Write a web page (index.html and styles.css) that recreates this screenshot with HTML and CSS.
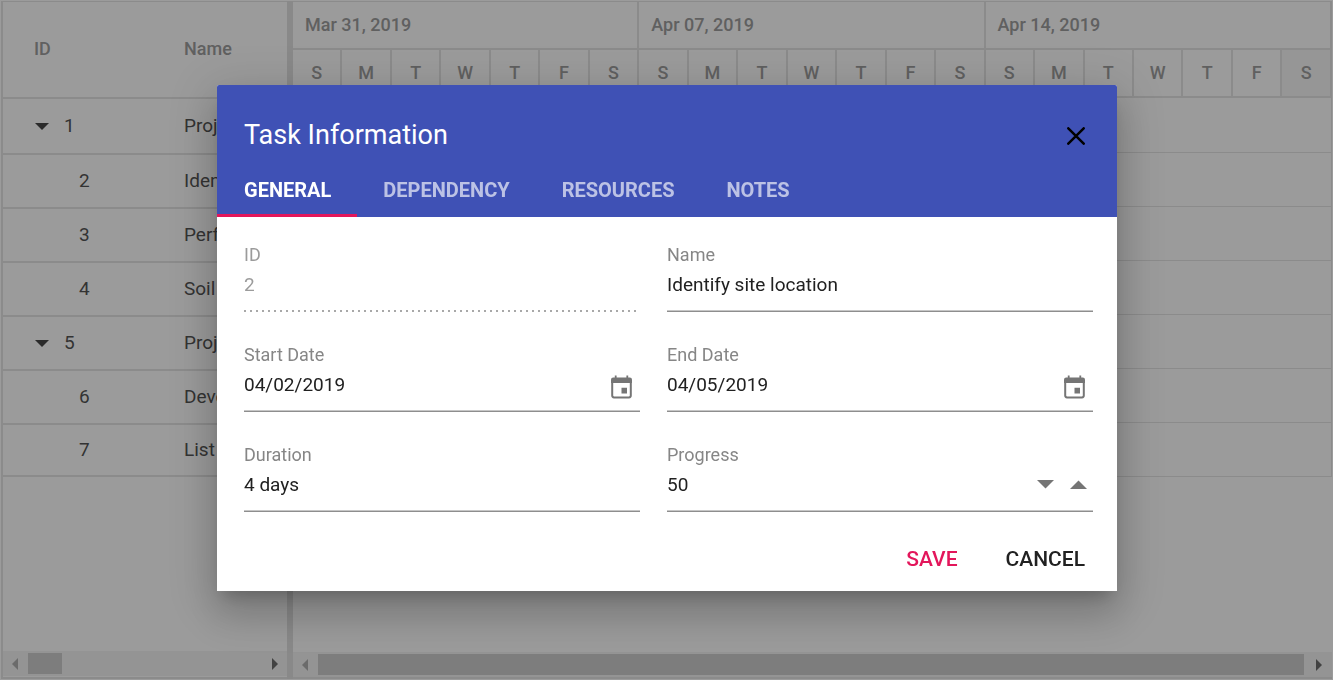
FILE: index.html
```
<!DOCTYPE html>
<html lang="en">
<head>
<meta charset="utf-8">
<title>Task Information</title>
<link rel="stylesheet" href="styles.css">
</head>
<body>
<main class="gantt">
  <section class="pane tree-pane">
    <table class="tree">
      <colgroup><col class="col-id"><col></colgroup>
      <thead><tr><th>ID</th><th>Name</th></tr></thead>
      <tbody>
        <tr><td class="parent"><svg class="expander" viewBox="0 0 14 7"><path d="M0 0H14L7 7Z"/></svg>1</td><td>Project</td></tr>
        <tr><td class="child">2</td><td>Identify</td></tr>
        <tr><td class="child">3</td><td>Perform</td></tr>
        <tr><td class="child">4</td><td>Soil test</td></tr>
        <tr><td class="parent"><svg class="expander" viewBox="0 0 14 7"><path d="M0 0H14L7 7Z"/></svg>5</td><td>Project</td></tr>
        <tr><td class="child">6</td><td>Develop</td></tr>
        <tr><td class="child">7</td><td>List</td></tr>
      </tbody>
    </table>
    <div class="scrollbar">
      <svg class="arrow" viewBox="0 0 6 12"><path d="M6 0V12L0 6Z"/></svg>
      <div class="track"><div class="thumb thumb-short"></div></div>
      <svg class="arrow arrow-active" viewBox="0 0 6 12"><path d="M0 0V12L6 6Z"/></svg>
    </div>
  </section>
  <div class="splitter"></div>
  <section class="pane chart-pane">
    <table class="timeline">
      <thead>
        <tr class="weeks"><th colspan="7">Mar 31, 2019</th><th colspan="7">Apr 07, 2019</th><th colspan="7">Apr 14, 2019</th></tr>
        <tr class="days">
          <th>S</th><th>M</th><th>T</th><th>W</th><th>T</th><th>F</th><th>S</th>
          <th>S</th><th>M</th><th>T</th><th>W</th><th>T</th><th>F</th><th>S</th>
          <th>S</th><th>M</th><th>T</th><th>W</th><th>T</th><th>F</th><th class="shaded">S</th>
        </tr>
      </thead>
      <tbody>
        <tr><td colspan="21"></td></tr>
        <tr><td colspan="21"></td></tr>
        <tr><td colspan="21"></td></tr>
        <tr><td colspan="21"></td></tr>
        <tr><td colspan="21"></td></tr>
        <tr><td colspan="21"></td></tr>
        <tr><td colspan="21"></td></tr>
      </tbody>
    </table>
    <div class="scrollbar">
      <svg class="arrow" viewBox="0 0 6 12"><path d="M6 0V12L0 6Z"/></svg>
      <div class="track"><div class="thumb"></div></div>
      <svg class="arrow arrow-active" viewBox="0 0 6 12"><path d="M0 0V12L6 6Z"/></svg>
    </div>
  </section>
</main>

<div class="overlay">
  <form class="dialog" role="dialog" aria-labelledby="dialog-title">
    <header class="dialog-header">
      <div class="title-row">
        <h1 class="title" id="dialog-title">Task Information</h1>
        <button class="close" type="button" aria-label="Close">
          <svg viewBox="0 0 18 18"><path d="M1.3 1.3L16.7 16.7M16.7 1.3L1.3 16.7"/></svg>
        </button>
      </div>
      <div class="tabs" role="tablist">
        <button class="tab tab-active" type="button" role="tab" aria-selected="true">GENERAL</button>
        <button class="tab" type="button" role="tab">DEPENDENCY</button>
        <button class="tab" type="button" role="tab">RESOURCES</button>
        <button class="tab" type="button" role="tab">NOTES</button>
      </div>
    </header>
    <div class="fields">
      <div class="field field-disabled">
        <label for="task-id">ID</label>
        <div class="control"><input id="task-id" type="text" value="2" disabled></div>
      </div>
      <div class="field">
        <label for="task-name">Name</label>
        <div class="control"><input id="task-name" type="text" value="Identify site location"></div>
      </div>
      <div class="field">
        <label for="start-date">Start Date</label>
        <div class="control">
          <input id="start-date" type="text" value="04/02/2019">
          <button class="date-button" type="button" aria-label="Pick start date"><svg viewBox="0 0 21 24"><path class="frame" d="M1.2 7V20.6Q1.2 22.4 3 22.4H18Q19.8 22.4 19.8 20.6V7"/><path d="M0 8V4.8Q0 2.6 2.2 2.6H3.8V.4H5.6V2.6H15.4V.4H17.2V2.6H18.8Q21 2.6 21 4.8V8ZM10.5 12.8H16V18.6H10.5Z"/></svg></button>
        </div>
      </div>
      <div class="field">
        <label for="end-date">End Date</label>
        <div class="control">
          <input id="end-date" type="text" value="04/05/2019">
          <button class="date-button" type="button" aria-label="Pick end date"><svg viewBox="0 0 21 24"><path class="frame" d="M1.2 7V20.6Q1.2 22.4 3 22.4H18Q19.8 22.4 19.8 20.6V7"/><path d="M0 8V4.8Q0 2.6 2.2 2.6H3.8V.4H5.6V2.6H15.4V.4H17.2V2.6H18.8Q21 2.6 21 4.8V8ZM10.5 12.8H16V18.6H10.5Z"/></svg></button>
        </div>
      </div>
      <div class="field">
        <label for="duration">Duration</label>
        <div class="control"><input id="duration" type="text" value="4 days"></div>
      </div>
      <div class="field">
        <label for="progress">Progress</label>
        <div class="control">
          <input id="progress" type="text" value="50">
          <div class="spinner">
            <button type="button" aria-label="Decrease progress"><svg viewBox="0 0 17 9"><path d="M0 0H17L8.5 8.5Z"/></svg></button>
            <button type="button" aria-label="Increase progress"><svg viewBox="0 0 17 9"><path d="M0 9H17L8.5 .5Z"/></svg></button>
          </div>
        </div>
      </div>
    </div>
    <footer class="actions">
      <button class="action action-primary" type="button">SAVE</button>
      <button class="action" type="button">CANCEL</button>
    </footer>
  </form>
</div>
</body>
</html>
```
FILE: styles.css
```
* { box-sizing: border-box; }

:root {
  --surface: #9b9b9b;
  --line: #8b8b8b;
  --accent: #e3165b;
}

body {
  margin: 0;
  background: var(--surface);
  font-family: Roboto, "Liberation Sans", sans-serif;
  font-size: 19px;
  color: #333;
}

button, input { font: inherit; }
button { padding: 0; border: 0; background: none; cursor: pointer; }
svg { display: block; }

/* Gantt */
.gantt {
  display: flex;
  height: 100vh;
  border: 1px solid var(--surface);
  overflow: hidden;
}
.pane {
  display: flex;
  flex-direction: column;
  justify-content: space-between;
  border-top: 1px solid var(--line);
  border-bottom: 2px solid var(--line);
  overflow: hidden;
}
.tree-pane { flex: 0 0 286px; padding-bottom: 1px; border-left: 2px solid var(--line); }
.chart-pane { flex: 1; min-width: 0; }
.splitter { flex: 0 0 6px; background: #898989; }

table { width: 100%; table-layout: fixed; border-spacing: 0; }
th, td { padding: 0 0 2px; text-align: left; white-space: nowrap; }
th { font-size: 18px; font-weight: 500; color: #606060; }

.col-id { width: 161px; }
.tree th, .tree td { border-bottom: 2px solid var(--line); }
.tree th { height: 97px; padding-left: 20px; }
.tree td { height: 54px; padding-left: 20px; }
.tree th:first-child { padding-left: 31px; }
.tree tr > :first-child { overflow: hidden; }
.tree tbody tr:first-child td { height: 56px; }
.tree tbody tr:last-child td { height: 52px; }
.tree .parent { padding-left: 32px; }
.tree .child { padding-left: 76px; }
.expander { display: inline-block; width: 14px; height: 7px; margin-right: 15px; vertical-align: middle; fill: #2b2b2b; }

.timeline th { height: 48px; border-right: 2px solid var(--line); border-bottom: 2px solid var(--line); }
.weeks th { padding-left: 12px; }
.days th { text-align: center; }
.days .shaded { background: #969696; }
.timeline td { height: 54px; border-right: 1px solid var(--line); border-bottom: 1px solid var(--line); }
.timeline tbody tr:first-child td { height: 55px; }

.scrollbar {
  display: flex;
  align-items: center;
  gap: 10px;
  height: 25px;
  padding: 0 9px;
  background: #949494;
}
.track { flex: 1; }
.thumb { height: 21px; background: #7d7d7d; }
.thumb-short { width: 34px; }
.chart-pane .scrollbar { padding-right: 10px; }
.chart-pane .track { padding-right: 2px; }
.arrow { width: 6px; height: 12px; fill: #6b6b6b; }
.arrow-active { fill: #424242; }

/* Dialog */
.overlay {
  position: fixed;
  inset: 0;
  display: flex;
  align-items: center;
  justify-content: center;
  padding: 0 0 4px 1px;
}
.dialog {
  width: 900px;
  max-width: 100%;
  border-radius: 2px 2px 0 0;
  background: #fff;
  box-shadow: 0 11px 15px -7px rgba(0, 0, 0, .2), 0 24px 38px 3px rgba(0, 0, 0, .14), 0 9px 46px 8px rgba(0, 0, 0, .12);
}
.dialog-header { padding-top: 24px; border-radius: 2px 2px 0 0; background: #3f51b5; }
.title-row {
  display: flex;
  align-items: center;
  justify-content: space-between;
  height: 52px;
  padding: 0 32px 0 27px;
}
.title { margin: 0; font-size: 27px; font-weight: 400; color: #fff; }
.close { padding-top: 2px; }
.close svg { width: 18px; height: 18px; fill: none; stroke: #000; stroke-width: 2.5; stroke-linecap: round; }
.tabs { display: flex; padding-right: 27px; }
.tab {
  height: 56px;
  padding: 5px 26px 0;
  border-bottom: 3px solid transparent;
  font-size: 20px;
  font-weight: 700;
  color: rgba(255, 255, 255, .65);
}
.tab-active { border-bottom-color: var(--accent); color: #fff; }
.tab:first-child { padding-left: 27px; }

.fields {
  display: grid;
  grid-template-columns: 396fr 426fr;
  gap: 33px 27px;
  padding: 28px 24px 0 27px;
}
.field label { display: block; font-size: 18px; line-height: 20px; color: #868686; }
.control {
  display: flex;
  height: 47px;
  padding-bottom: 7px;
  border-bottom: 1px solid #8e8e8e;
  box-shadow: inset 0 -1px #c6c6c6;
}
.control input {
  flex: 1;
  min-width: 0;
  padding: 0;
  border: 0;
  outline: 0;
  background: none;
  color: #212121;
}
.field-disabled label, .field-disabled input { color: #9b9b9b; }
.field-disabled .control {
  border-bottom-color: transparent;
  box-shadow: none;
  background: repeating-linear-gradient(90deg, #a8a8a8 0 2px, transparent 2px 6px) bottom left / 393px 2px no-repeat border-box;
}
.date-button { padding: 4px 8px 0; }
.date-button svg { width: 21px; height: 24px; fill: #757575; }
.date-button .frame { fill: none; stroke: #757575; stroke-width: 2; }
.spinner { display: flex; gap: 16px; padding-right: 6px; }
.spinner svg { width: 17px; height: 9px; fill: #757575; }

.actions { display: flex; justify-content: flex-end; gap: 48px; padding: 23px 32px 8px; }
.action { height: 48px; font-size: 21px; font-weight: 500; color: #212121; }
.action-primary { color: var(--accent); }
```
